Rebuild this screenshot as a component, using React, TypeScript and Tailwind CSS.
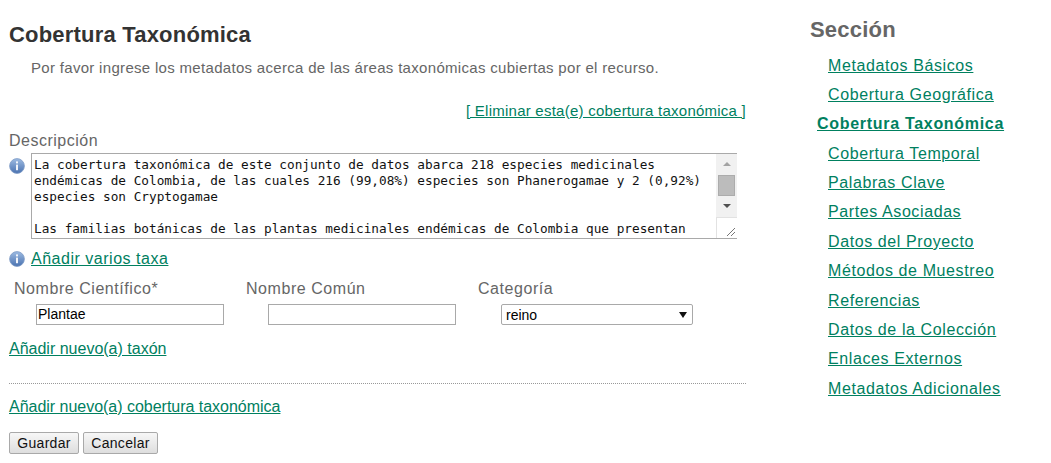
import React from "react";

const linkCls = "text-[#00805f] underline";

function InfoIcon() {
  return (
    <svg width="16" height="16" viewBox="0 0 16 16" className="shrink-0">
      <defs>
        <linearGradient id="ig" x1="0" y1="0" x2="0" y2="1">
          <stop offset="0" stopColor="#9dbbe2" />
          <stop offset="1" stopColor="#4a72b0" />
        </linearGradient>
      </defs>
      <circle cx="8" cy="8" r="7.4" fill="url(#ig)" stroke="#7f9cc6" strokeWidth="0.8" />
      <rect x="7" y="3.4" width="2" height="2" fill="#f2f5fa" />
      <rect x="7" y="6.6" width="2" height="5.6" fill="#f2f5fa" />
    </svg>
  );
}

const sections = [
  "Metadatos Básicos",
  "Cobertura Geográfica",
  "Cobertura Taxonómica",
  "Cobertura Temporal",
  "Palabras Clave",
  "Partes Asociadas",
  "Datos del Proyecto",
  "Métodos de Muestreo",
  "Referencias",
  "Datos de la Colección",
  "Enlaces Externos",
  "Metadatos Adicionales",
];

function Label({ children }: { children: React.ReactNode }) {
  return <div className="pl-[5px] h-[20px] leading-[20px] text-[16px] text-[#666] tracking-[0.55px]">{children}</div>;
}

export default function App() {
  return (
    <div className="w-[1051px] h-[463px] overflow-hidden bg-white flex font-['Liberation_Sans',Arial,sans-serif] tracking-[0.3px]">
      <main className="w-[737px] ml-[9px] shrink-0 pt-[22px]">
        <h1 className="text-[22px] leading-[26px] font-bold text-[#333] tracking-[0.2px]">Cobertura Taxonómica</h1>
        <p className="mt-[10px] ml-[22px] text-[15px] leading-[20px] text-[#666] tracking-[0.31px]">
          Por favor ingrese los metadatos acerca de las áreas taxonómicas cubiertas por el recurso.
        </p>
        <div className="mt-[24px] text-right text-[15px] leading-[18px] tracking-[0.24px]">
          <a className={linkCls}>[ Eliminar esta(e) cobertura taxonómica ]</a>
        </div>
        <div className="mt-[11px] text-[16px] leading-[20px] text-[#666] tracking-[0.5px]">Descripción</div>
        <div className="mt-[2px] flex gap-[6px]">
          <div className="pt-[5px]"><InfoIcon /></div>
          <div className="w-[706px] h-[86px] border-y border-l border-[#a9a9a9] flex overflow-hidden">
            <div className="flex-1 px-[2px] pt-[3px] font-['DejaVu_Sans_Mono',monospace] text-[12.74px] leading-[16px] tracking-normal text-[#111] overflow-hidden">
              <div>La cobertura taxonómica de este conjunto de datos abarca 218 especies medicinales</div>
              <div>endémicas de Colombia, de las cuales 216 (99,08%) especies son Phanerogamae y 2 (0,92%)</div>
              <div>especies son Cryptogamae</div>
              <div className="h-[16px]" />
              <div className="whitespace-nowrap">Las familias botánicas de las plantas medicinales endémicas de Colombia que presentan</div>
            </div>
            <div className="w-[21px] shrink-0 flex flex-col">
              <div className="h-[63px] bg-[#f1f1f1] flex flex-col items-center">
                <div className="mt-[8px] w-0 h-0 border-x-[4px] border-x-transparent border-b-[4px] border-b-[#a3a3a3]" />
                <div className="mt-[9px] w-[17px] h-[21px] bg-[#bcbcbc] border border-[#acacac]" />
                <div className="mt-[8px] w-0 h-0 border-x-[4px] border-x-transparent border-t-[4px] border-t-[#505050]" />
              </div>
              <div className="flex-1 flex items-end justify-end border-l border-t border-[#e2e2e2]">
                <svg width="10" height="10" viewBox="0 0 10 10" className="mb-[1px] mr-[1px]">
                  <path d="M1 9 L9 1 M5 9 L9 5" stroke="#777" strokeWidth="1" />
                </svg>
              </div>
            </div>
          </div>
        </div>
        <div className="mt-[10px] flex items-center gap-[6px] h-[19px] text-[16px] leading-[19px] tracking-[0.52px]">
          <InfoIcon />
          <a className={linkCls}>Añadir varios taxa</a>
        </div>
        <div className="mt-[11px] flex">
          <div className="w-[232px] shrink-0">
            <Label>Nombre Científico*</Label>
            <div className="pl-[27px] mt-[5px]">
              <div className="w-[188px] h-[21px] border border-[#a9a9a9] px-[1px] text-[14px] leading-[19px] tracking-normal text-black">Plantae</div>
            </div>
          </div>
          <div className="w-[232px] shrink-0">
            <Label>Nombre Común</Label>
            <div className="pl-[27px] mt-[5px]">
              <div className="w-[188px] h-[21px] border border-[#a9a9a9]" />
            </div>
          </div>
          <div className="w-[225px] shrink-0">
            <Label>Categoría</Label>
            <div className="pl-[28px] mt-[5px]">
              <div className="w-[192px] h-[21px] border border-[#a9a9a9] rounded-[2px] pl-[4px] text-[14px] leading-[18px] tracking-normal text-black flex items-center justify-between pr-[5px]">
                <span>reino</span>
                <span className="w-0 h-0 border-x-[4px] border-x-transparent border-t-[6px] border-t-[#111]" />
              </div>
            </div>
          </div>
        </div>
        <div className="mt-[15px] text-[16px] leading-[18px] tracking-normal">
          <a className={linkCls}>Añadir nuevo(a) taxón</a>
        </div>
        <div className="mt-[25px] border-t border-dotted border-[#999]" />
        <div className="mt-[14px] text-[16px] leading-[18px] tracking-[-0.02px]">
          <a className={linkCls}>Añadir nuevo(a) cobertura taxonómica</a>
        </div>
        <div className="mt-[16px] flex gap-[4px]">
          <button className="w-[70px] h-[22px] border border-[#a9a9a9] rounded-[2px] bg-gradient-to-b from-[#f7f7f7] to-[#dedede] text-[14px] leading-[18px] text-[#111]">Guardar</button>
          <button className="w-[75px] h-[22px] border border-[#a9a9a9] rounded-[2px] bg-gradient-to-b from-[#f7f7f7] to-[#dedede] text-[14px] leading-[18px] text-[#111]">Cancelar</button>
        </div>
      </main>
      <aside className="ml-[64px] pt-[17px] flex-1 tracking-[0.6px]">
        <h2 className="text-[22px] leading-[26px] font-bold text-[#666] tracking-[0.2px]">Sección</h2>
        <ul className="mt-[7.7px]">
          {sections.map((s) =>
            s === "Cobertura Taxonómica" ? (
              <li key={s} className="h-[29.36px] leading-[29.36px] text-[16px] pl-[7px] font-bold tracking-[0.7px]">
                <a className={linkCls}>{s}</a>
              </li>
            ) : (
              <li key={s} className="h-[29.36px] leading-[29.36px] text-[16px] pl-[18px]">
                <a className={linkCls}>{s}</a>
              </li>
            )
          )}
        </ul>
      </aside>
    </div>
  );
}
